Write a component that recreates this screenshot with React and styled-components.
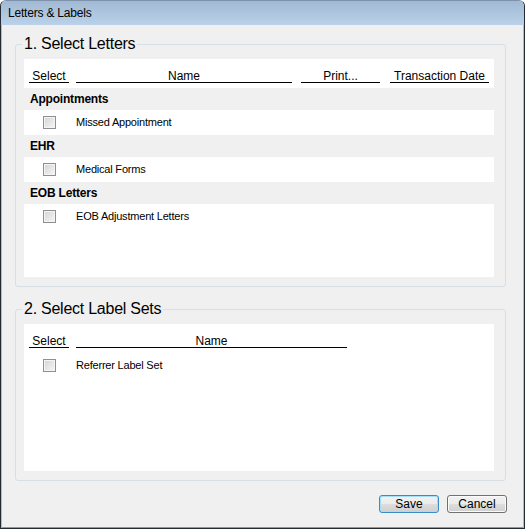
import React from 'react';
import styled, { createGlobalStyle } from 'styled-components';

const letterGroups = [
  { name: 'Appointments', items: ['Missed Appointment'] },
  { name: 'EHR', items: ['Medical Forms'] },
  { name: 'EOB Letters', items: ['EOB Adjustment Letters'] },
];

const labelSets = ['Referrer Label Set'];

const letterColumns = [
  { title: 'Select', width: 40, gap: 0 },
  { title: 'Name', width: 216, gap: 7 },
  { title: 'Print...', width: 79, gap: 9 },
  { title: 'Transaction Date', width: 99, gap: 10 },
];

const labelColumns = [
  { title: 'Select', width: 40, gap: 0 },
  { title: 'Name', width: 271, gap: 7 },
];

const App = () => {
  return (
    <Window>
      <GlobalStyles />
      <TitleBar>Letters &amp; Labels</TitleBar>
      <Body>
        <Group>
          <Legend>1. Select Letters</Legend>
          <Panel $height={218}>
            <HeaderRow>
              {letterColumns.map((c) => (
                <HeaderCell key={c.title} $width={c.width} $gap={c.gap}>
                  {c.title}
                </HeaderCell>
              ))}
            </HeaderRow>
            {letterGroups.map((g) => (
              <React.Fragment key={g.name}>
                <Category>{g.name}</Category>
                {g.items.map((item) => (
                  <ItemRow key={item}>
                    <CheckCell>
                      <Check type="checkbox" />
                    </CheckCell>
                    <ItemName>{item}</ItemName>
                  </ItemRow>
                ))}
              </React.Fragment>
            ))}
          </Panel>
        </Group>
        <Group $spaced>
          <Legend>2. Select Label Sets</Legend>
          <Panel $height={147}>
            <HeaderRow>
              {labelColumns.map((c) => (
                <HeaderCell key={c.title} $width={c.width} $gap={c.gap}>
                  {c.title}
                </HeaderCell>
              ))}
            </HeaderRow>
            {labelSets.map((item) => (
              <ItemRow key={item}>
                <CheckCell>
                  <Check type="checkbox" />
                </CheckCell>
                <ItemName>{item}</ItemName>
              </ItemRow>
            ))}
          </Panel>
        </Group>
      </Body>
      <Footer>
        <Button $default>Save</Button>
        <Button>Cancel</Button>
      </Footer>
    </Window>
  );
};

const GlobalStyles = createGlobalStyle`
  html, body {
    margin: 0;
    padding: 0;
    background: #ffffff;
  }
`;

const Window = styled.div`
  width: 525px;
  height: 529px;
  box-sizing: border-box;
  display: flex;
  flex-direction: column;
  border: 1px solid #252b33;
  border-top-color: #7d93ab;
  border-radius: 6px 6px 0 0;
  overflow: hidden;
  background: #f0f0f0;
  box-shadow: inset 1px 0 0 #8ec5ea, inset -1px 0 0 #8ec5ea, inset 0 -1px 0 #4faede;
  font-family: 'Liberation Sans', Arial, sans-serif;
  color: #000;
`;

const TitleBar = styled.div`
  height: 24px;
  flex-shrink: 0;
  padding-left: 7px;
  line-height: 24px;
  font-size: 12px;
  letter-spacing: -0.2px;
  background: linear-gradient(#a2b9d3, #bad1e9);
`;

const Body = styled.div`
  display: flex;
  flex-direction: column;
  padding: 0 18px 0 14px;
`;

const Group = styled.fieldset`
  margin: ${(p) => (p.$spaced ? '11px' : '8px')} 0 0;
  padding: 4px 11px 9px 8px;
  min-width: 0;
  border: 1px solid #d5dfe5;
  border-radius: 3px;
`;

const Legend = styled.legend`
  margin-left: -2px;
  padding: 0 2px;
  font-size: 16px;
  line-height: 22px;
  letter-spacing: -0.25px;
  color: #000;
`;

const Panel = styled.div`
  height: ${(p) => p.$height}px;
  display: flex;
  flex-direction: column;
  background: #ffffff;
`;

const HeaderRow = styled.div`
  display: flex;
  height: 29px;
  padding-left: 5px;
  flex-shrink: 0;
  background: #ffffff;
`;

const HeaderCell = styled.div`
  width: ${(p) => p.$width}px;
  margin-left: ${(p) => p.$gap}px;
  height: 24px;
  padding-top: 11px;
  box-sizing: border-box;
  border-bottom: 1px solid #000;
  line-height: 12px;
  font-size: 12px;
  text-align: center;
  white-space: nowrap;
`;

const Category = styled.div`
  height: 22px;
  flex-shrink: 0;
  padding-left: 6px;
  line-height: 23px;
  font-size: 12px;
  font-weight: bold;
  letter-spacing: -0.2px;
  background: #f0f0f0;
`;

const ItemRow = styled.div`
  display: flex;
  align-items: center;
  height: 25px;
  flex-shrink: 0;
  padding-left: 5px;
`;

const CheckCell = styled.div`
  width: 40px;
  display: flex;
  justify-content: center;
`;

const Check = styled.input`
  appearance: none;
  margin: 0;
  width: 13px;
  height: 13px;
  box-sizing: border-box;
  border: 1px solid #8f8f8f;
  background: linear-gradient(135deg, #d3d3d3, #f7f7f7);
  box-shadow: inset 0 0 0 1px #f4f4f4;
`;

const ItemName = styled.span`
  margin-left: 7px;
  padding-bottom: 1px;
  font-size: 11px;
  letter-spacing: -0.2px;
`;

const Footer = styled.div`
  display: flex;
  justify-content: flex-end;
  gap: 8px;
  padding: 14px 17px 0 0;
`;

const Button = styled.button`
  width: 60px;
  height: 18px;
  padding: 0;
  border: 1px solid ${(p) => (p.$default ? '#3a8cc8' : '#707070')};
  border-radius: 3px;
  background: linear-gradient(#f2f2f2 0%, #ebebeb 48%, #dddddd 52%, #cfcfcf 100%);
  box-shadow: inset 0 0 0 1px ${(p) => (p.$default ? '#a6def7' : '#fbfbfb')};
  font-family: 'Liberation Sans', Arial, sans-serif;
  font-size: 12px;
  line-height: 15px;
  color: #000;
`;

export default App;
